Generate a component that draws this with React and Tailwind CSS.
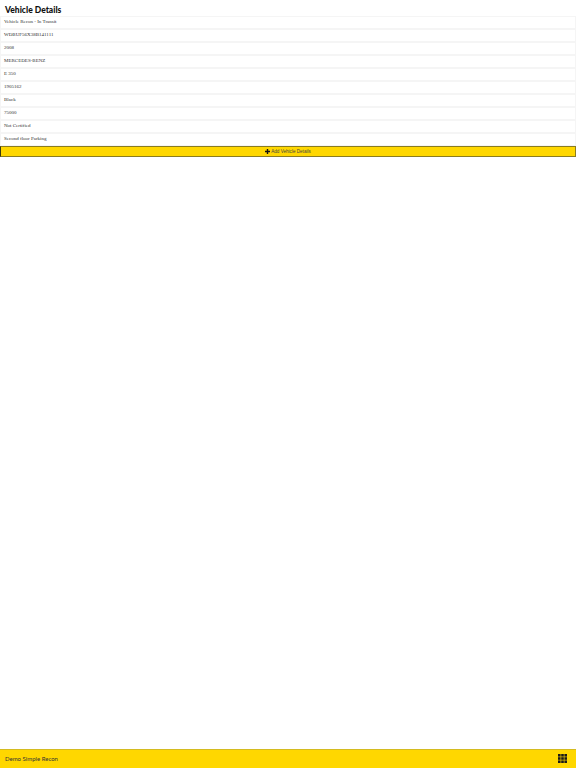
const rows = [
  'Vehicle Recon - In Transit',
  'WDBUF56X38B141111',
  '2008',
  'MERCEDES-BENZ',
  'E 350',
  '1905162',
  'Black',
  '75000',
  'Not Certified',
  'Second floor Parking',
]

function GridIcon() {
  return (
    <svg width="9" height="9" viewBox="0 0 9 9" className="w-[9px] h-[9px]" fill="#1a1a1a">
      {[0, 3.2, 6.4].map((y) =>
        [0, 3.2, 6.4].map((x) => <rect key={`${x}-${y}`} x={x} y={y} width="2.6" height="2.6" />)
      )}
    </svg>
  )
}

export default function App() {
  return (
    <div className="h-[768px] w-[576px] flex flex-col bg-white overflow-hidden font-['Liberation_Sans',sans-serif]">
      <h1 className="h-[16px] pl-[5px] pt-[4px] text-[8.5px] leading-[12px] font-black text-[#111] font-['Lato',sans-serif]">
        Vehicle Details
      </h1>
      <ul className="flex flex-col">
        {rows.map((row) => (
          <li
            key={row}
            className="h-[13px] pl-[3px] border border-[#f5f5f5] text-[5px] leading-[10.5px] text-[#333] oldstyle-nums font-['Liberation_Serif',serif]"
          >
            {row}
          </li>
        ))}
      </ul>
      <button
        type="button"
        className="h-[11px] w-full flex items-center justify-center gap-[1px] bg-[#ffd700] border border-[#8a7c20] border-l-[#3a3a10] text-[4.6px] leading-[9px] text-[#444]"
      >
        <svg width="5" height="5" viewBox="0 0 5 5" className="w-[5px] h-[5px]" fill="#111">
          <path d="M1.8 0h1.4v1.8H5v1.4H3.2V5H1.8V3.2H0V1.8h1.8z" />
        </svg>
        <span>Add Vehicle Details</span>
      </button>
      <div className="flex-1" />
      <footer className="h-[19px] flex items-center justify-between pl-[5px] pr-[9px] pb-[1px] bg-[#ffd700] border-t border-[#d4bb20] text-[6px] leading-[7px] text-[#333] font-['Lato',sans-serif]">
        <span>Demo Simple Recon</span>
        <GridIcon />
      </footer>
    </div>
  )
}
